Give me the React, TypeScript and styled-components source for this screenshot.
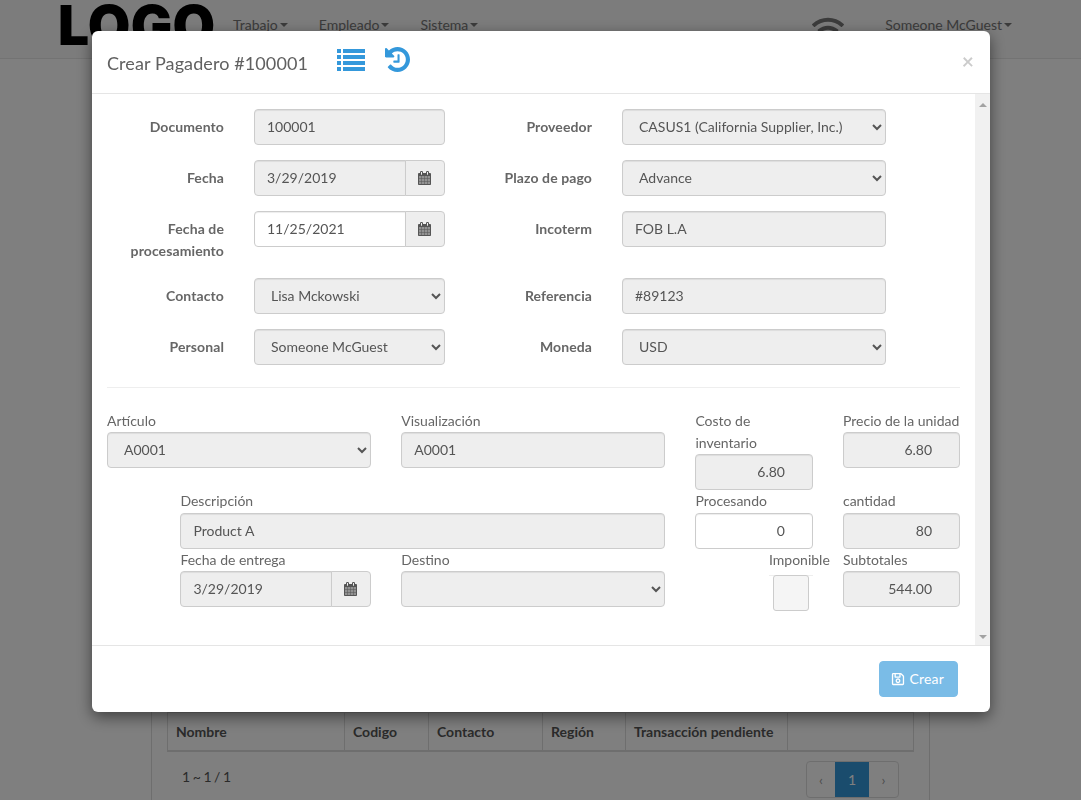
import React from 'react';
import styled, { createGlobalStyle } from 'styled-components';
import { FaRegSave, FaWifi } from 'react-icons/fa';

const GlobalStyle = createGlobalStyle`
  html, body {
    margin: 0;
    padding: 0;
    height: 100%;
    overflow: hidden;
    background: #fff;
  }
  body {
    font-family: Lato, "Open Sans", sans-serif;
    font-size: 14px;
    line-height: 22px;
    color: #555;
  }
  * {
    box-sizing: border-box;
  }
`;

const Page = styled.div`
  height: 800px;
  overflow: hidden;
`;

const Navbar = styled.div`
  display: flex;
  align-items: flex-start;
  height: 59px;
  padding: 14px 69px 0 58px;
  background: #f8f8f8;
  border-bottom: 1px solid #e7e7e7;
`;

const Logo = styled.div`
  width: 175px;
  height: 59px;
  margin-top: -14px;
  font-family: Inter, "Liberation Sans", sans-serif;
  font-weight: 900;
  font-size: 55px;
  line-height: 50px;
  letter-spacing: 0.3px;
  color: #000;
`;

const NavLink = styled.span<{ $gap?: number }>`
  display: flex;
  align-items: center;
  margin-right: ${(p) => p.$gap ?? 0}px;
  color: #777;
  font-size: 14px;
`;

const Caret = styled.i`
  display: inline-block;
  margin-left: 2px;
  border-top: 4px solid currentColor;
  border-left: 4px solid transparent;
  border-right: 4px solid transparent;
`;

const WifiSlot = styled.div`
  display: flex;
  margin: -1px 41px 0 auto;
  color: #777;
`;

const Panel = styled.div`
  width: 779px;
  height: 760px;
  margin: 0 0 0 151px;
  padding: 653px 15px 0;
  border: 1px solid #ddd;
  border-top: 0;
`;

const HeadRow = styled.div`
  display: grid;
  grid-template-columns: 176px 84px 114px 83px 162px 1fr;
  height: 40px;
  border: 1px solid #ddd;
  border-bottom-width: 2px;
`;

const HeadCell = styled.div`
  padding: 8px;
  font-weight: 700;
  white-space: nowrap;
  & + & {
    border-left: 1px solid #ddd;
  }
`;

const TableFoot = styled.div`
  display: flex;
  align-items: flex-start;
  justify-content: space-between;
  padding: 9px 15px 0;
`;

const Summary = styled.span`
  margin-top: 5px;
  letter-spacing: -0.5px;
`;

const Pager = styled.div`
  display: flex;
  width: 93px;
  height: 37px;
  border: 1px solid #ddd;
  border-radius: 4px;
  overflow: hidden;
`;

const PageItem = styled.span<{ $active?: boolean }>`
  display: flex;
  align-items: center;
  justify-content: center;
  width: ${(p) => (p.$active ? 34 : 28)}px;
  color: ${(p) => (p.$active ? '#fff' : '#999')};
  background: ${(p) => (p.$active ? '#3498db' : 'transparent')};
  &:last-child {
    flex: 1;
  }
`;

const Backdrop = styled.div`
  position: fixed;
  inset: 0;
  padding: 31px 0 0 92px;
  background: rgba(0, 0, 0, 0.5);
`;

const Modal = styled.div`
  display: flex;
  flex-direction: column;
  width: 898px;
  height: 681px;
  background: #fff;
  border-radius: 6px;
  box-shadow: 0 5px 15px rgba(0, 0, 0, 0.5);
  overflow: hidden;
`;

const ModalHeader = styled.div`
  display: flex;
  align-items: center;
  height: 63px;
  padding: 0 15px;
  border-bottom: 1px solid #e5e5e5;
  flex: none;
`;

const ModalTitle = styled.h4`
  margin: 1px 29px 0 0;
  font-size: 18px;
  font-weight: 400;
  line-height: 24px;
  letter-spacing: 0.1px;
  color: #606060;
`;

const HeaderIcon = styled.svg<{ $gap: number }>`
  display: block;
  margin: -5px ${(p) => p.$gap}px 0 0;
  fill: #3498db;
`;

const CloseButton = styled.span`
  margin: -3px 1px 0 auto;
  font-size: 21px;
  font-weight: 700;
  line-height: 1;
  color: #000;
  opacity: 0.2;
`;

const ModalBody = styled.div`
  display: flex;
  flex: none;
  height: 551px;
`;

const BodyContent = styled.div`
  flex: 1;
  min-width: 0;
  padding: 15px 15px 0;
`;

const ScrollRail = styled.div`
  display: flex;
  flex: none;
  flex-direction: column;
  align-items: center;
  justify-content: space-between;
  width: 15px;
  padding: 9px 0 6px;
  background: #f1f1f1;
`;

const ScrollArrow = styled.i<{ $down?: boolean }>`
  display: block;
  border-left: 4px solid transparent;
  border-right: 4px solid transparent;
  ${(p) => (p.$down ? 'border-top: 4px solid #a3a3a3;' : 'border-bottom: 4px solid #a3a3a3;')}
`;

const TopForm = styled.div`
  display: grid;
  grid-template-columns: 117px 191px 117px 264px;
  column-gap: 30px;
  row-gap: 15px;
`;

const RowLabel = styled.label`
  padding: 7px 0 1px;
  font-weight: 700;
  letter-spacing: 0.1px;
  text-align: right;
  color: #666;
`;

const Input = styled.input<{ $right?: boolean }>`
  display: block;
  width: 100%;
  height: 36px;
  padding: 5px ${(p) => (p.$right ? 27 : 12)}px 7px 12px;
  font: inherit;
  color: #555;
  text-align: ${(p) => (p.$right ? 'right' : 'left')};
  background: #fff;
  border: 1px solid #ccc;
  border-radius: 4px;
  box-shadow: inset 0 1px 1px rgba(0, 0, 0, 0.075);
  &:disabled {
    background: #eee;
    opacity: 1;
  }
`;

const Select = styled.select`
  display: block;
  width: 100%;
  height: 36px;
  padding: 5px 12px 7px;
  font: inherit;
  color: #555;
  background: #eee;
  border: 1px solid #ccc;
  border-radius: 4px;
  box-shadow: inset 0 1px 1px rgba(0, 0, 0, 0.075);
  &:disabled {
    opacity: 1;
  }
`;

const DateGroup = styled.div`
  display: flex;
  height: 36px;
  ${Input} {
    flex: 1;
    min-width: 0;
    border-radius: 4px 0 0 4px;
  }
`;

const DateAddon = styled.span`
  display: flex;
  flex: none;
  align-items: center;
  justify-content: center;
  width: 40px;
  margin-left: -1px;
  padding-right: 1px;
  background: #eee;
  border: 1px solid #ccc;
  border-radius: 0 4px 4px 0;
`;

const Divider = styled.hr`
  margin: 22px 0;
  border: 0;
  border-top: 1px solid #eee;
`;

const ItemGrid = styled.div`
  display: grid;
  grid-template-columns: 264.2px 264.2px 117.6px 117.1px;
  column-gap: 30px;
`;

const Field = styled.div<{ $indent?: boolean; $span?: boolean }>`
  margin-left: ${(p) => (p.$indent ? 73.4 : 0)}px;
  grid-column: ${(p) => (p.$span ? 'span 2' : 'auto')};
`;

const FieldLabel = styled.label<{ $tall?: boolean }>`
  display: block;
  padding-bottom: ${(p) => (p.$tall ? 1 : 0)}px;
  white-space: pre-line;
  color: #666;
`;

const CheckField = styled.div`
  justify-self: end;
  width: 44px;
`;

const CheckLabel = styled.label`
  display: block;
  margin-bottom: 4px;
  white-space: nowrap;
  color: #666;
`;

const CheckRule = styled.div`
  display: flex;
  justify-content: center;
  border-top: 1px solid #eee;
`;

const Check = styled.input`
  display: block;
  width: 36px;
  height: 36px;
  margin: -1px 0 0;
  appearance: none;
  background: #f5f5f5;
  border: 1px solid #ccc;
  border-radius: 3px;
`;

const ModalFooter = styled.div`
  display: flex;
  flex: 1;
  align-items: flex-start;
  justify-content: flex-end;
  padding: 15px 32px 0 0;
  border-top: 1px solid #e5e5e5;
`;

const SaveButton = styled.button`
  display: flex;
  align-items: center;
  gap: 4px;
  height: 36px;
  padding: 0 13px 0 11px;
  font: inherit;
  letter-spacing: 0.2px;
  color: #fff;
  background: #3498db;
  border: 1px solid #3498db;
  border-radius: 4px;
  opacity: 0.65;
`;

const CalendarIcon = () => (
  <svg width="13" height="14" viewBox="0 0 1664 1792" fill="#555">
    <rect x="128" y="640" width="1408" height="1024" opacity="0.6" />
    <path d="M128 1664h288v-288h-288v288zm352 0h320v-288h-320v288zm-352-352h288v-320h-288v320zm352 0h320v-320h-320v320zm-352-384h288v-288h-288v288zm736 736h320v-288h-320v288zm-384-736h320v-288h-320v288zm768 736h288v-288h-288v288zm-384-352h320v-320h-320v320zm-352-864v-288q0-13-9.5-22.5t-22.5-9.5h-64q-13 0-22.5 9.5t-9.5 22.5v288q0 13 9.5 22.5t22.5 9.5h64q13 0 22.5-9.5t9.5-22.5zm736 864h288v-320h-288v320zm-384-384h320v-288h-320v288zm384 0h288v-288h-288v288zm32-480v-288q0-13-9.5-22.5t-22.5-9.5h-64q-13 0-22.5 9.5t-9.5 22.5v288q0 13 9.5 22.5t22.5 9.5h64q13 0 22.5-9.5t9.5-22.5zm384-64v1280q0 52-38 90t-90 38h-1408q-52 0-90-38t-38-90v-1280q0-52 38-90t90-38h128v-96q0-66 47-113t113-47h64q66 0 113 47t47 113v96h384v-96q0-66 47-113t113-47h64q66 0 113 47t47 113v96h128q52 0 90 38t38 90z" />
  </svg>
);

const DateField = ({ value, disabled }: { value: string; disabled?: boolean }) => (
  <DateGroup>
    <Input defaultValue={value} disabled={disabled} />
    <DateAddon>
      <CalendarIcon />
    </DateAddon>
  </DateGroup>
);

const SelectField = ({ value }: { value: string }) => (
  <Select disabled defaultValue={value}>
    <option value={value}>{value}</option>
  </Select>
);

const columns = ['Nombre', 'Codigo', 'Contacto', 'Región', 'Transacción pendiente', ''];
const listRows = [0, 6, 12, 18];

export default function App() {
  return (
    <Page>
      <GlobalStyle />
      <Navbar>
        <Logo>LOGO</Logo>
        <NavLink $gap={31}>
          Trabajo
          <Caret />
        </NavLink>
        <NavLink $gap={31}>
          Empleado
          <Caret />
        </NavLink>
        <NavLink>
          Sistema
          <Caret />
        </NavLink>
        <WifiSlot>
          <FaWifi size={32} />
        </WifiSlot>
        <NavLink>
          Someone McGuest
          <Caret />
        </NavLink>
      </Navbar>
      <Panel>
        <HeadRow>
          {columns.map((name) => (
            <HeadCell key={name}>{name}</HeadCell>
          ))}
        </HeadRow>
        <TableFoot>
          <Summary>1 ~ 1 / 1</Summary>
          <Pager>
            <PageItem>‹</PageItem>
            <PageItem $active>1</PageItem>
            <PageItem>›</PageItem>
          </Pager>
        </TableFoot>
      </Panel>
      <Backdrop>
        <Modal>
          <ModalHeader>
            <ModalTitle>Crear Pagadero #100001</ModalTitle>
            <HeaderIcon $gap={20} width="28" height="22" viewBox="0 0 28 22">
              {listRows.map((y) => (
                <g key={y}>
                  <rect x="0" y={y} width="4" height="4" />
                  <rect x="6" y={y} width="22" height="4" />
                </g>
              ))}
            </HeaderIcon>
            <HeaderIcon $gap={0} width="25" height="25" viewBox="0 -128 1536 1536">
              <path d="M1536 640q0 156-61 298t-164 245-245 164-298 61q-172 0-327-72.5t-264-204.5q-7-10-6.5-22.5t8.5-20.5l137-138q10-9 25-9 16 2 23 12 73 95 179 147t225 52q104 0 198.5-40.5t163.5-109.5 109.5-163.5 40.5-198.5-40.5-198.5-109.5-163.5-163.5-109.5-198.5-40.5q-98 0-188 35.5t-160 101.5l137 138q31 30 14 69-17 40-59 40h-448q-26 0-45-19t-19-45v-448q0-42 40-59 39-17 69 14l130 129q107-101 244.5-156.5t284.5-55.5q156 0 298 61t245 164 164 245 61 298zm-640-288v448q0 14-9 23t-23 9h-320q-14 0-23-9t-9-23v-64q0-14 9-23t23-9h224v-352q0-14 9-23t23-9h64q14 0 23 9t9 23z" />
            </HeaderIcon>
            <CloseButton>×</CloseButton>
          </ModalHeader>
          <ModalBody>
            <BodyContent>
              <TopForm>
                <RowLabel>Documento</RowLabel>
                <Input disabled defaultValue="100001" />
                <RowLabel>Proveedor</RowLabel>
                <SelectField value="CASUS1 (California Supplier, Inc.)" />

                <RowLabel>Fecha</RowLabel>
                <DateField value="3/29/2019" disabled />
                <RowLabel>Plazo de pago</RowLabel>
                <SelectField value="Advance" />

                <RowLabel>Fecha de procesamiento</RowLabel>
                <DateField value="11/25/2021" />
                <RowLabel>Incoterm</RowLabel>
                <Input disabled defaultValue="FOB L.A" />

                <RowLabel>Contacto</RowLabel>
                <SelectField value="Lisa Mckowski" />
                <RowLabel>Referencia</RowLabel>
                <Input disabled defaultValue="#89123" />

                <RowLabel>Personal</RowLabel>
                <SelectField value="Someone McGuest" />
                <RowLabel>Moneda</RowLabel>
                <SelectField value="USD" />
              </TopForm>
              <Divider />
              <ItemGrid>
                <Field>
                  <FieldLabel>Artículo</FieldLabel>
                  <SelectField value="A0001" />
                </Field>
                <Field>
                  <FieldLabel>Visualización</FieldLabel>
                  <Input disabled defaultValue="A0001" />
                </Field>
                <Field>
                  <FieldLabel>{'Costo de\ninventario'}</FieldLabel>
                  <Input $right disabled defaultValue="6.80" />
                </Field>
                <Field>
                  <FieldLabel>Precio de la unidad</FieldLabel>
                  <Input $right disabled defaultValue="6.80" />
                </Field>

                <Field $indent $span>
                  <FieldLabel $tall>Descripción</FieldLabel>
                  <Input disabled defaultValue="Product A" />
                </Field>
                <Field>
                  <FieldLabel $tall>Procesando</FieldLabel>
                  <Input $right defaultValue="0" />
                </Field>
                <Field>
                  <FieldLabel $tall>cantidad</FieldLabel>
                  <Input $right disabled defaultValue="80" />
                </Field>

                <Field $indent>
                  <FieldLabel>Fecha de entrega</FieldLabel>
                  <DateField value="3/29/2019" disabled />
                </Field>
                <Field>
                  <FieldLabel>Destino</FieldLabel>
                  <SelectField value="" />
                </Field>
                <CheckField>
                  <CheckLabel>Imponible</CheckLabel>
                  <CheckRule>
                    <Check type="checkbox" disabled />
                  </CheckRule>
                </CheckField>
                <Field>
                  <FieldLabel>Subtotales</FieldLabel>
                  <Input $right disabled defaultValue="544.00" />
                </Field>
              </ItemGrid>
            </BodyContent>
            <ScrollRail>
              <ScrollArrow />
              <ScrollArrow $down />
            </ScrollRail>
          </ModalBody>
          <ModalFooter>
            <SaveButton>
              <FaRegSave size={14} />
              Crear
            </SaveButton>
          </ModalFooter>
        </Modal>
      </Backdrop>
    </Page>
  );
}
